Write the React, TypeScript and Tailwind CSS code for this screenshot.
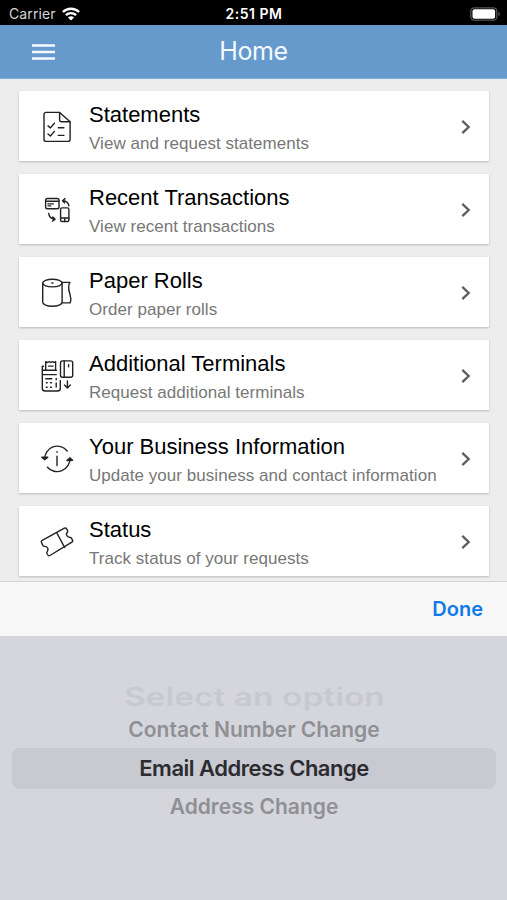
import type { ReactNode } from "react";

const rows: { title: string; text: string; icon: ReactNode }[] = [
  {
    title: "Statements",
    text: "View and request statements",
    icon: (
      <>
        <path d="M6 2.4h13.6l10.5 9.4v17.6a2 2 0 0 1-2 2H6a2 2 0 0 1-2-2V4.4a2 2 0 0 1 2-2z" />
        <path d="M19.6 2.4v7.4a2 2 0 0 0 2 2h8.5M8 15.9l2.4 2 4-4.6M8 24l2.4 2 4-4.6M18.3 17.7h5.6M18.3 25.4h5.6" />
      </>
    ),
  },
  {
    title: "Recent Transactions",
    text: "View recent transactions",
    icon: (
      <>
        <rect x="5.6" y="5.5" width="13.4" height="10.3" rx="1.8" />
        <path d="M5.6 8.3H19M8 10.9h5.3M8 12.9h2.7" />
        <rect x="20.6" y="14.9" width="8.3" height="13.6" rx="1.5" />
        <path d="M20.6 25h8.3M24.7 25v3.5" />
        <path d="M28.9 12.8c-.4-3-2.4-4.8-6-5.1M25 5.6l-2.5 2.1 2 2.2M8.7 20.4c.3 3.2 2.3 5.3 6 5.8M12.8 23.9l2.3 2.3-2.6 1.9" />
      </>
    ),
  },
  {
    title: "Paper Rolls",
    text: "Order paper rolls",
    icon: (
      <>
        <ellipse cx="12.4" cy="7.1" rx="9.7" ry="3.8" />
        <path d="M2.7 7.1v19.2c0 2.2 4.3 3.9 9.7 3.9s9.7-1.7 9.7-3.9V7.1" />
        <path d="M21.7 6.4h8.2c-2 3.2-1.6 7 0 11.6 1 3 1.4 5.6.4 8.9h-8.2" />
        <path d="M11.9 7h1" />
      </>
    ),
  },
  {
    title: "Additional Terminals",
    text: "Request additional terminals",
    icon: (
      <>
        <path d="M3.5 7.3H2.3v21.9a2.8 2.8 0 0 0 2.8 2.8h12.4a2.8 2.8 0 0 0 2.8-2.8v-7.5M2.3 11.2h14M2.3 15.6h14" />
        <path d="M5.7 11V2.6l1.8.9 1.7-.9 1.6.9 1.7-.9 1.5.9 1.6-.9V11M8.6 7.1h4.5" />
        <path d="M5.8 19.7h6M6.3 23.8h.9M10.5 23.8h.9M6.3 28.2h.9M10.5 28.2h.9M16.2 19.4v1.3M16.2 24v4" />
        <rect x="20.5" y="1.9" width="12.2" height="16.3" rx="2" />
        <path d="M24.2 1.9v16.3M28.6 5.6v2.2M27.4 22v6.8M24.5 26l2.9 2.9 2.9-2.9" />
      </>
    ),
  },
  {
    title: "Your Business Information",
    text: "Update your business and contact information",
    icon: (
      <>
        <path d="M4.7 17.3A12.6 12.6 0 0 1 27.2 9M30 16.2A12.9 12.9 0 0 1 7.4 25.2" />
        <path d="M1.8 15.2h6l-3.1 2.4zM26.9 18.5l2.9-2.6 2.8 2.3z" fill="currentColor" />
        <path d="M17 14.3v9.2M17 9.6v.7" />
      </>
    ),
  },
  {
    title: "Status",
    text: "Track status of your requests",
    icon: (
      <>
        <path d="M1.8 15.7 24.4 3.2c.9-.5 1.7-.2 2.2.6l.8 1.4c.5.9.3 1.6-.3 2.3-1.4 1.9-.2 4.7 2.4 4.8 1 0 1.6.3 2 1l1 1.8c.4.8.2 1.5-.6 2L9.9 30.5c-.9.5-1.6.3-2.1-.5L7 28.5c-.4-.8-.2-1.5.3-2.2 1.5-2.3.2-4.8-2.5-4.9-.9 0-1.6-.3-2-1l-1.2-2.6c-.4-.8-.5-1.6.2-2.1z" />
        <path d="m16.6 7.5 8 14.9" />
      </>
    ),
  },
];

function StatusBar() {
  return (
    <div className="grid h-[25px] grid-cols-3 items-center bg-black pt-[2px] pr-[6px] pl-[9px] text-white">
      <div className="flex items-center gap-[6px]">
        <span className="text-[14px] leading-none tracking-[0.12px] text-[#d6d6d6]">Carrier</span>
        <svg className="h-[14px] w-[18px]" viewBox="0 0 18 14" fill="none" stroke="white" strokeWidth="2.4">
          <path d="M.9 5C5.4.6 12.6.6 17.1 5M3.9 8.2c2.9-2.8 7.3-2.8 10.2 0" />
          <path d="M9 13.6 5.9 10.5c1.7-1.6 4.5-1.6 6.2 0z" fill="white" stroke="none" />
        </svg>
      </div>
      <span className="-ml-[2px] text-center text-[14px] leading-none font-semibold tracking-[0.5px] whitespace-nowrap">
        2:51 PM
      </span>
      <svg className="h-[14px] w-[31px] justify-self-end" viewBox="0 0 31 14" fill="none">
        <rect x=".8" y=".8" width="26" height="12.4" rx="3.5" stroke="#555" strokeWidth="1.3" />
        <rect x="2.5" y="2.2" width="22.6" height="9.6" rx="2" fill="white" />
        <path d="M28.5 4.8v4.4c1.8-.8 1.8-3.6 0-4.4z" fill="#666" />
      </svg>
    </div>
  );
}

export default function App() {
  return (
    <div className="flex h-[900px] w-[507px] flex-col overflow-hidden bg-[#ededed] font-['Inter',sans-serif]">
      <StatusBar />

      {/* Header */}
      <header className="grid h-[54px] grid-cols-[1fr_auto_1fr] items-center border-b border-[#7fb0dc] bg-[#6699cc] text-[#f4faff]">
        <svg className="ml-[32px] h-[16px] w-[23px]" viewBox="0 0 23 16" stroke="currentColor" strokeWidth="2.7">
          <path d="M0 1.5h23M0 8h23M0 14.5h23" />
        </svg>
        <h1 className="text-[25px] leading-none tracking-[-0.4px]">Home</h1>
      </header>

      {/* Menu */}
      <main className="flex h-[502px] shrink-0 flex-col gap-[13px] pt-[12px] pr-[18px] pl-[19px] font-['Liberation_Sans',Arial,sans-serif]">
        {rows.map((row) => (
          <div
            key={row.title}
            className="flex h-[70px] shrink-0 items-center bg-white pr-[17px] pl-[21px] shadow-[0_1px_2px_rgba(0,0,0,0.22)]"
          >
            <svg
              className="mt-[2px] size-[34px] shrink-0 text-[#222]"
              viewBox="0 0 34 34"
              fill="none"
              stroke="currentColor"
              strokeWidth="1.4"
              strokeLinecap="round"
              strokeLinejoin="round"
            >
              {row.icon}
            </svg>
            <div className="ml-[15px] flex-1 pt-[6px] whitespace-nowrap">
              <h2 className="text-[22px] leading-[28px] text-black">{row.title}</h2>
              <p className="pt-px text-[17px] leading-[27px] tracking-[0.04px] text-[#777]">{row.text}</p>
            </div>
            <svg className="mt-[2px] h-[16px] w-[12px]" viewBox="0 0 12 16" fill="none" stroke="#5e5e5e" strokeWidth="2.3">
              <path d="M2.3 1.8 8.7 8l-6.4 6.2" />
            </svg>
          </div>
        ))}
      </main>

      {/* Picker toolbar */}
      <div className="flex h-[55px] shrink-0 items-center justify-end border-t border-[#d4d4d4] bg-[#f8f8f8] pr-[24px]">
        <button className="text-[20px] leading-none font-semibold text-[#117aea]">Done</button>
      </div>

      {/* Picker */}
      <div className="flex flex-1 flex-col items-center bg-[#d5d6dc] pt-[46px] pr-[11px] pl-[12px] whitespace-nowrap">
        <div className="flex h-[30px] scale-x-[1.34] items-center pt-[2px] text-[25px] font-semibold text-[#c8c9ce]">
          Select an option
        </div>
        <div className="flex h-[36px] items-center text-[21px] font-semibold text-[#8f9095]">
          Contact Number Change
        </div>
        <div className="flex h-[41px] w-full items-center justify-center rounded-[8px] bg-[#c9c9d2] text-[22px] font-semibold tracking-[-0.5px] text-[#2b2c30]">
          Email Address Change
        </div>
        <div className="flex h-[36px] items-center text-[21px] font-semibold text-[#8f9095]">
          Address Change
        </div>
      </div>
    </div>
  );
}
